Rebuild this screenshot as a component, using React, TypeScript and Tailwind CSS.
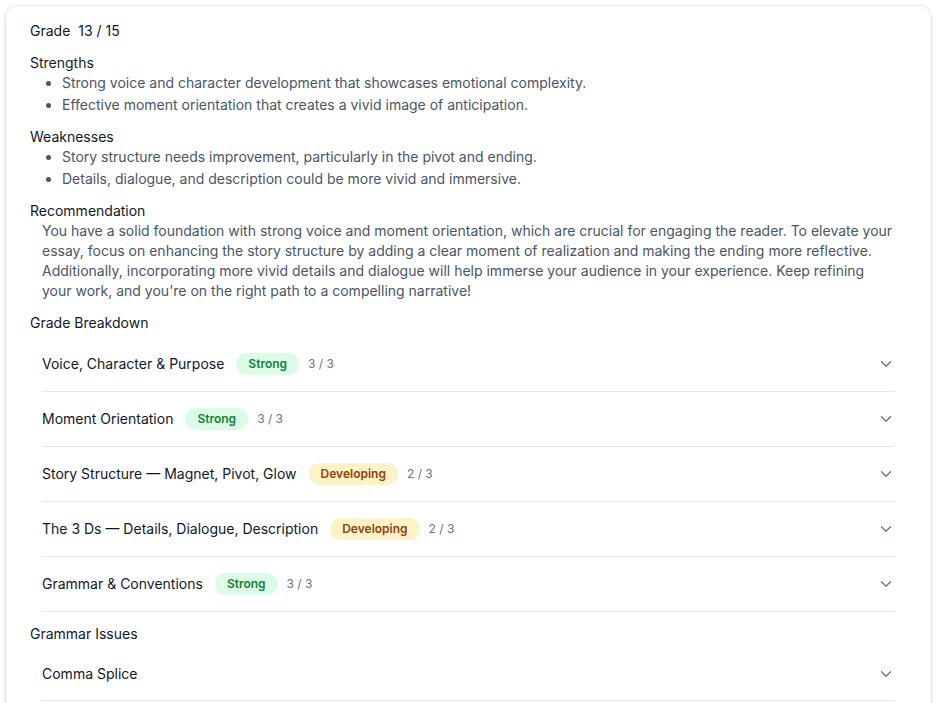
import React from "react";
import { ChevronDown } from "lucide-react";

type Level = "Strong" | "Developing";

const breakdown: { label: string; level: Level; score: string }[] = [
  { label: "Voice, Character & Purpose", level: "Strong", score: "3 / 3" },
  { label: "Moment Orientation", level: "Strong", score: "3 / 3" },
  { label: "Story Structure — Magnet, Pivot, Glow", level: "Developing", score: "2 / 3" },
  { label: "The 3 Ds — Details, Dialogue, Description", level: "Developing", score: "2 / 3" },
  { label: "Grammar & Conventions", level: "Strong", score: "3 / 3" },
];

function Badge({ level }: { level: Level }) {
  const cls =
    level === "Strong"
      ? "bg-[#dcfce7] text-[#15803d]"
      : "bg-[#fef3c7] text-[#92400e]";
  return (
    <span className={`inline-flex items-center rounded-full px-3 py-[3px] text-xs leading-4 font-semibold ${cls}`}>
      {level}
    </span>
  );
}

function Row({ children }: { children: React.ReactNode }) {
  return (
    <div className="flex items-center justify-between py-4 border-b border-[#e5e7eb]">
      <div className="flex items-center">{children}</div>
      <ChevronDown size={18} strokeWidth={1.75} className="text-gray-500" />
    </div>
  );
}

export default function App() {
  return (
    <div className="p-[5px] bg-white" style={{ fontFamily: "Inter, 'Noto Sans', sans-serif" }}>
      <div className="rounded-xl border border-[#e5e7eb] shadow-sm px-6 pt-[15px] pb-6 text-sm leading-5">
        <div className="flex flex-col gap-3">
          <div className="flex gap-2 text-gray-900">
            <span>Grade</span>
            <span>13 / 15</span>
          </div>

          <div>
            <div className="text-gray-900">Strengths</div>
            <ul className="list-disc pl-8 text-gray-600 space-y-0.5">
              <li>Strong voice and character development that showcases emotional complexity.</li>
              <li>Effective moment orientation that creates a vivid image of anticipation.</li>
            </ul>
          </div>

          <div>
            <div className="text-gray-900">Weaknesses</div>
            <ul className="list-disc pl-8 text-gray-600 space-y-0.5">
              <li>Story structure needs improvement, particularly in the pivot and ending.</li>
              <li>Details, dialogue, and description could be more vivid and immersive.</li>
            </ul>
          </div>

          <div>
            <div className="text-gray-900">Recommendation</div>
            <p className="px-3 text-gray-600">
              You have a solid foundation with strong voice and moment orientation, which are crucial for engaging the reader. To elevate your essay, focus on enhancing the story structure by adding a clear moment of realization and making the ending more reflective. Additionally, incorporating more vivid details and dialogue will help immerse your audience in your experience. Keep refining your work, and you're on the right path to a compelling narrative!
            </p>
          </div>

          <div>
            <div className="text-gray-900">Grade Breakdown</div>
            <div className="mt-1 px-3">
              {breakdown.map((b) => (
                <Row key={b.label}>
                  <span className="text-gray-900">{b.label}</span>
                  <span className="ml-3">
                    <Badge level={b.level} />
                  </span>
                  <span className="ml-[9px] text-xs text-gray-500">{b.score}</span>
                </Row>
              ))}
            </div>
          </div>

          <div>
            <div className="text-gray-900">Grammar Issues</div>
            <div className="mt-1 px-3">
              <Row>
                <span className="text-gray-900">Comma Splice</span>
              </Row>
            </div>
          </div>
        </div>
      </div>
    </div>
  );
}
